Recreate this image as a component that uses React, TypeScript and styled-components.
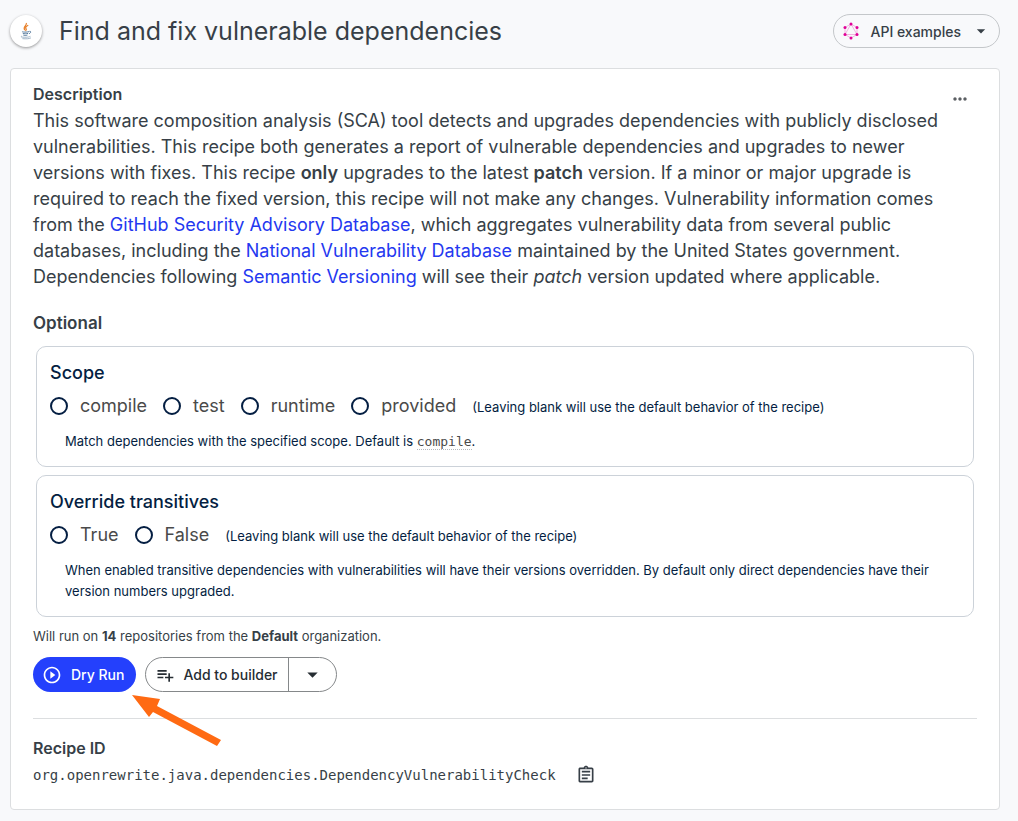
import React from "react";
import styled, { createGlobalStyle } from "styled-components";
import {
  MdArrowDropDown,
  MdMoreHoriz,
  MdOutlineAssignment,
  MdPlayCircleOutline,
  MdPlaylistAdd,
} from "react-icons/md";

const GlobalStyle = createGlobalStyle`
  * { box-sizing: border-box; }
  body {
    margin: 0;
    background: #f8f9fb;
    color: #373f47;
    font-family: Inter, "Liberation Sans", sans-serif;
    font-size: 18px;
  }
  button { font-family: inherit; cursor: pointer; }
`;

const Page = styled.div`
  min-height: 100vh;
  padding: 14px 18px 11px 10px;
`;

const Header = styled.header`
  display: flex;
  align-items: center;
  height: 34px;
  margin-bottom: 20px;
`;

const LogoBadge = styled.span`
  display: flex;
  align-items: center;
  justify-content: center;
  flex: none;
  width: 32px;
  height: 32px;
  margin-right: 17px;
  border-radius: 50%;
  background: #fff;
  box-shadow: 0 1px 3px rgba(0, 0, 0, 0.4);
`;

const Title = styled.h1`
  flex: 1;
  margin: 0;
  font-size: 25px;
  font-weight: 400;
  line-height: 32px;
`;

const ExamplesButton = styled.button`
  display: flex;
  align-items: center;
  height: 34px;
  padding: 0 8px;
  border: 1px solid #c4c7ca;
  border-radius: 17px;
  background: transparent;
  color: #373f47;
  font-size: 14px;
  font-weight: 500;
  span { margin: 0 10px; }
`;

const Card = styled.main`
  padding: 16px 22px 23px;
  border: 1px solid #dcdee0;
  border-radius: 4px;
  background: #fff;
`;

const CardTop = styled.div`
  display: flex;
  align-items: flex-start;
  justify-content: space-between;
  height: 23px;
`;

const Label = styled.h2`
  margin: 0;
  font-size: 16px;
  font-weight: 600;
  line-height: 18px;
`;

const MoreButton = styled.button`
  display: flex;
  margin: 4px 7px 0 0;
  padding: 0;
  border: 0;
  background: none;
  color: #5b5f63;
`;

const Description = styled.p`
  max-width: 925px;
  margin: 0 0 20px;
  line-height: 26px;
  a { color: #2438f0; text-decoration: none; }
  strong { font-weight: 600; }
`;

const SectionTitle = styled.h2`
  margin: 0 0 10px;
  font-size: 17px;
  font-weight: 600;
  line-height: 26px;
`;

const OptionBox = styled.fieldset`
  min-width: 0;
  margin: 0 3px 8px;
  padding: 14px 13px;
  border: 1px solid #ccd2d9;
  border-radius: 10px;
  color: #041e42;
`;

const OptionTitle = styled.legend`
  float: left;
  width: 100%;
  padding: 0;
  font-size: 18px;
  font-weight: 500;
  line-height: 24px;
`;

const Choices = styled.div`
  display: flex;
  flex-wrap: wrap;
  clear: both;
  align-items: center;
  padding-top: 8px;
`;

const Choice = styled.label`
  display: flex;
  align-items: center;
  margin-right: 16px;
  color: #4a4a4a;
  line-height: 26px;
`;

const Radio = styled.input`
  appearance: none;
  width: 18px;
  height: 18px;
  margin: 0 12px 0 0;
  border: 2px solid #041e42;
  border-radius: 50%;
  background: #fff;
  &:checked { box-shadow: inset 0 0 0 3px #fff; background: #041e42; }
`;

const Hint = styled.span`
  padding-top: 2px;
  font-size: 13px;
  line-height: 22px;
`;

const Help = styled.p`
  margin: 12px 0 0 15px;
  font-size: 13px;
  line-height: 21px;
  code {
    border-bottom: 1px dotted #b4b8bd;
    color: #4a4a4a;
    font-family: "DejaVu Sans Mono", monospace;
  }
`;

const RunInfo = styled.p`
  margin: 0 0 10px;
  font-size: 13px;
  line-height: 22px;
`;

const Actions = styled.div`
  position: relative;
  display: flex;
  gap: 9px;
`;

const RunButton = styled.button`
  display: flex;
  align-items: center;
  gap: 9px;
  height: 35px;
  padding: 0 12px 0 9px;
  border: 0;
  border-radius: 18px;
  background: #2440fc;
  color: #fff;
  font-size: 14px;
  font-weight: 500;
`;

const SplitButton = styled.div`
  display: flex;
  height: 35px;
  border: 1px solid #85888a;
  border-radius: 18px;
`;

const SplitPart = styled.button`
  display: flex;
  align-items: center;
  gap: 8px;
  padding: 0 10px 0 9px;
  border: 0;
  background: none;
  color: #262d33;
  font-size: 14px;
  font-weight: 500;
  & + & { padding: 0 11px; border-left: 1px solid #85888a; }
`;

const Pointer = styled.svg`
  position: absolute;
  top: 38px;
  left: 99px;
  pointer-events: none;
`;

const Divider = styled.hr`
  height: 1px;
  margin: 26px 0 20px;
  border: 0;
  background: #dcdee0;
`;

const RecipeId = styled.div`
  display: flex;
  align-items: center;
  gap: 20px;
  margin-top: 7px;
  code { font-family: "DejaVu Sans Mono", monospace; font-size: 14px; line-height: 22px; }
`;

const CopyButton = styled.button`
  display: flex;
  padding: 0;
  border: 0;
  background: none;
  color: #373f47;
`;

const JavaLogo = () => (
  <svg width="16" height="20" viewBox="0 0 18 20" fill="none" aria-hidden="true">
    <path d="M9.400 1C10.200 4 5 5 7.600 9M11.500 3.600C9 5 8 6 9 7.400S9 9 8.400 9.800" stroke="#e8812b" strokeWidth="1.400" />
    <path d="M4.800 10.600c-1 .6 5 1 7.600.1M5.400 12.700c1.600.6 4 .5 6 0M6 14.600c1.400.6 3.200.5 4.600 0M12.800 10.400c2-.6 2 1.800-.3 2.600" stroke="#446b90" strokeWidth="1" />
    <path d="M4.200 15.800c-3.800 1.200 6.800 2 9.800.2M5 18.600c4 .4 8 .2 9.600-.9" stroke="#7f9ab3" strokeWidth=".8" />
  </svg>
);

const GraphQLLogo = () => (
  <svg width="18" height="18" viewBox="0 0 18 18" aria-hidden="true">
    <path d="M9 2l6 3.500v7L9 16l-6-3.500v-7zM9 2l6 10.500H3z" fill="none" stroke="#e535ab" strokeWidth=".5" opacity=".7" />
    <g fill="#e10098">
      <circle cx="9" cy="2" r="1.500" />
      <circle cx="15" cy="5.500" r="1.500" />
      <circle cx="15" cy="12.500" r="1.500" />
      <circle cx="9" cy="16" r="1.500" />
      <circle cx="3" cy="12.500" r="1.500" />
      <circle cx="3" cy="5.500" r="1.500" />
    </g>
  </svg>
);

type OptionProps = {
  name: string;
  title: string;
  choices: string[];
  children: React.ReactNode;
};

const Option = ({ name, title, choices, children }: OptionProps) => (
  <OptionBox>
    <OptionTitle>{title}</OptionTitle>
    <Choices>
      {choices.map((choice) => (
        <Choice key={choice}>
          <Radio type="radio" name={name} value={choice} />
          {choice}
        </Choice>
      ))}
      <Hint>(Leaving blank will use the default behavior of the recipe)</Hint>
    </Choices>
    <Help>{children}</Help>
  </OptionBox>
);

export default function App() {
  return (
    <Page>
      <GlobalStyle />
      <Header>
        <LogoBadge><JavaLogo /></LogoBadge>
        <Title>Find and fix vulnerable dependencies</Title>
        <ExamplesButton type="button">
          <GraphQLLogo />
          <span>API examples</span>
          <MdArrowDropDown size={20} />
        </ExamplesButton>
      </Header>
      <Card>
        <CardTop>
          <Label>Description</Label>
          <MoreButton type="button" aria-label="More options"><MdMoreHoriz size={20} /></MoreButton>
        </CardTop>
        <Description>
          This software composition analysis (SCA) tool detects and upgrades dependencies with publicly
          disclosed vulnerabilities. This recipe both generates a report of vulnerable dependencies and
          upgrades to newer versions with fixes. This recipe <strong>only</strong> upgrades to the latest{" "}
          <strong>patch</strong> version. If a minor or major upgrade is required to reach the fixed
          version, this recipe will not make any changes. Vulnerability information comes from the{" "}
          <a href="#advisories">GitHub Security Advisory Database</a>, which aggregates vulnerability data
          from several public databases, including the <a href="#nvd">National Vulnerability Database</a>{" "}
          maintained by the United States government. Dependencies following{" "}
          <a href="#semver">Semantic Versioning</a> will see their <em>patch</em> version updated where
          applicable.
        </Description>
        <SectionTitle>Optional</SectionTitle>
        <Option name="scope" title="Scope" choices={["compile", "test", "runtime", "provided"]}>
          Match dependencies with the specified scope. Default is <code>compile</code>.
        </Option>
        <Option name="override" title="Override transitives" choices={["True", "False"]}>
          When enabled transitive dependencies with vulnerabilities will have their versions overridden. By
          default only direct dependencies have their version numbers upgraded.
        </Option>
        <RunInfo>
          Will run on <b>14</b> repositories from the <b>Default</b> organization.
        </RunInfo>
        <Actions>
          <RunButton type="button"><MdPlayCircleOutline size={20} />Dry Run</RunButton>
          <SplitButton>
            <SplitPart type="button"><MdPlaylistAdd size={20} />Add to builder</SplitPart>
            <SplitPart type="button" aria-label="More actions"><MdArrowDropDown size={25} /></SplitPart>
          </SplitButton>
          <Pointer width="92" height="52" viewBox="0 0 92 52" aria-hidden="true">
            <path d="M0 0l28 4-3 7 64 34-4 6-64-34-4 5z" fill="#ff6a13" />
          </Pointer>
        </Actions>
        <Divider />
        <Label>Recipe ID</Label>
        <RecipeId>
          <code>org.openrewrite.java.dependencies.DependencyVulnerabilityCheck</code>
          <CopyButton type="button" aria-label="Copy recipe ID"><MdOutlineAssignment size={20} /></CopyButton>
        </RecipeId>
      </Card>
    </Page>
  );
}
